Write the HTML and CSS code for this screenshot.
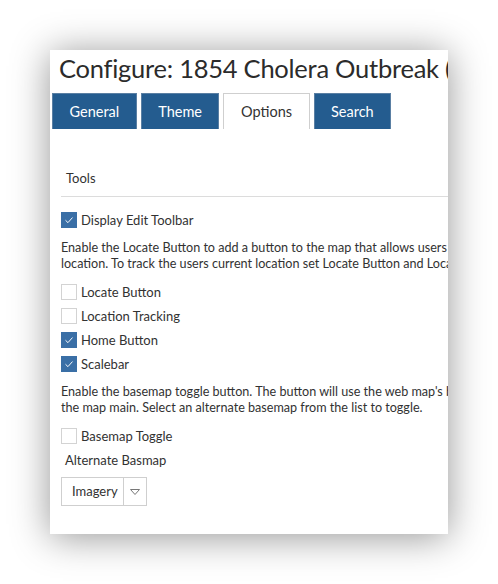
FILE: index.html
```html
<!DOCTYPE html>
<html>
<head>
<meta charset="utf-8">
<link rel="stylesheet" href="styles.css">
</head>
<body>
<div class="panel">
  <h1 class="title">Configure: 1854 Cholera Outbreak (Manual)</h1>
  <div class="tabs">
    <div class="tab">General</div>
    <div class="tab">Theme</div>
    <div class="tab active">Options</div>
    <div class="tab">Search</div>
  </div>
  <div class="content">
    <div class="section-head">Tools</div>
    <label class="check first"><span class="box on"><svg viewBox="0 0 16 16"><path d="M4 8.3 L6.8 11 L12 5.2" fill="none" stroke="#fff" stroke-width="1.1"/></svg></span>Display Edit Toolbar</label>
    <p class="desc">Enable the Locate Button to add a button to the map that allows users to zoom to their current<br>location. To track the users current location set Locate Button and Location Tracking to true.</p>
    <div class="group">
      <label class="check"><span class="box"></span>Locate Button</label>
      <label class="check"><span class="box"></span>Location Tracking</label>
      <label class="check"><span class="box on"><svg viewBox="0 0 16 16"><path d="M4 8.3 L6.8 11 L12 5.2" fill="none" stroke="#fff" stroke-width="1.1"/></svg></span>Home Button</label>
      <label class="check"><span class="box on"><svg viewBox="0 0 16 16"><path d="M4 8.3 L6.8 11 L12 5.2" fill="none" stroke="#fff" stroke-width="1.1"/></svg></span>Scalebar</label>
    </div>
    <p class="desc">Enable the basemap toggle button. The button will use the web map's basemap as<br>the map main. Select an alternate basemap from the list to toggle.</p>
    <label class="check"><span class="box"></span>Basemap Toggle</label>
    <div class="field-label">Alternate Basmap</div>
    <div class="select">
      <span class="select-text">Imagery</span>
      <span class="select-arrow"><svg viewBox="0 0 12 8" width="12" height="8"><path d="M1.5 1.5 L10.5 1.5 L6 6.5 Z" fill="none" stroke="#777" stroke-width="1"/></svg></span>
    </div>
  </div>
</div>
</body>
</html>
```

FILE: styles.css
```css
html, body {
  margin: 0;
  padding: 0;
  background: #ffffff;
}
body {
  width: 498px;
  height: 584px;
  overflow: hidden;
  font-family: "Lato", "Open Sans", sans-serif;
  color: #323232;
  padding-top: 50px;
  box-sizing: border-box;
}
.panel {
  width: 398px;
  height: 484px;
  margin-left: 50px;
  background: #fff;
  box-shadow: 0 3px 36px rgba(0, 0, 0, 0.42);
  overflow: hidden;
  box-sizing: border-box;
}
.title {
  margin: 0;
  padding: 2px 0 0 9px;
  font-size: 25.5px;
  font-weight: 400;
  letter-spacing: -0.25px;
  line-height: 32px;
  white-space: nowrap;
  color: #2b2b2b;
}
.tabs {
  display: flex;
  gap: 4px;
  margin: 9px 0 0 2px;
}
.tab {
  height: 36px;
  box-sizing: border-box;
  padding: 0 16.5px;
  background: #245c8f;
  border: 1px solid #5a7fa3;
  border-bottom: none;
  color: #fff;
  font-size: 14.5px;
  line-height: 35px;
}
.tab.active {
  background: #fff;
  color: #333;
  border: 1px solid #cfcfcf;
  border-bottom: none;
}
.content {
  padding: 0 0 0 11px;
}
.section-head {
  margin-top: 40px;
  padding: 0 0 9px 5px;
  border-bottom: 1px solid #dcdcdc;
  font-size: 13px;
  line-height: 18px;
  white-space: nowrap;
}
.check {
  display: flex;
  align-items: center;
  gap: 4px;
  height: 24px;
  font-size: 13px;
  white-space: nowrap;
}
.check.first {
  margin-top: 11px;
}
.box {
  width: 16px;
  height: 16px;
  box-sizing: border-box;
  border: 1px solid #d3d3d3;
  background: #fff;
  display: inline-block;
}
.box.on {
  background: #3a6fa6;
  border-color: #3a6fa6;
}
.box svg {
  display: block;
  width: 14px;
  height: 14px;
}
.desc {
  margin: 8px 0 8px 0;
  font-size: 12.6px;
  line-height: 16px;
  white-space: nowrap;
}
.field-label {
  padding-left: 4px;
  font-size: 13px;
  line-height: 24px;
}
.select {
  display: inline-flex;
  margin-top: 5px;
  height: 29px;
  box-sizing: border-box;
  border: 1px solid #cfcfcf;
  font-size: 13px;
}
.select-text {
  width: 62px;
  box-sizing: border-box;
  padding-left: 10px;
  line-height: 27px;
  border-right: 1px solid #cfcfcf;
}
.select-arrow {
  width: 22px;
  display: flex;
  align-items: center;
  justify-content: center;
}
```
